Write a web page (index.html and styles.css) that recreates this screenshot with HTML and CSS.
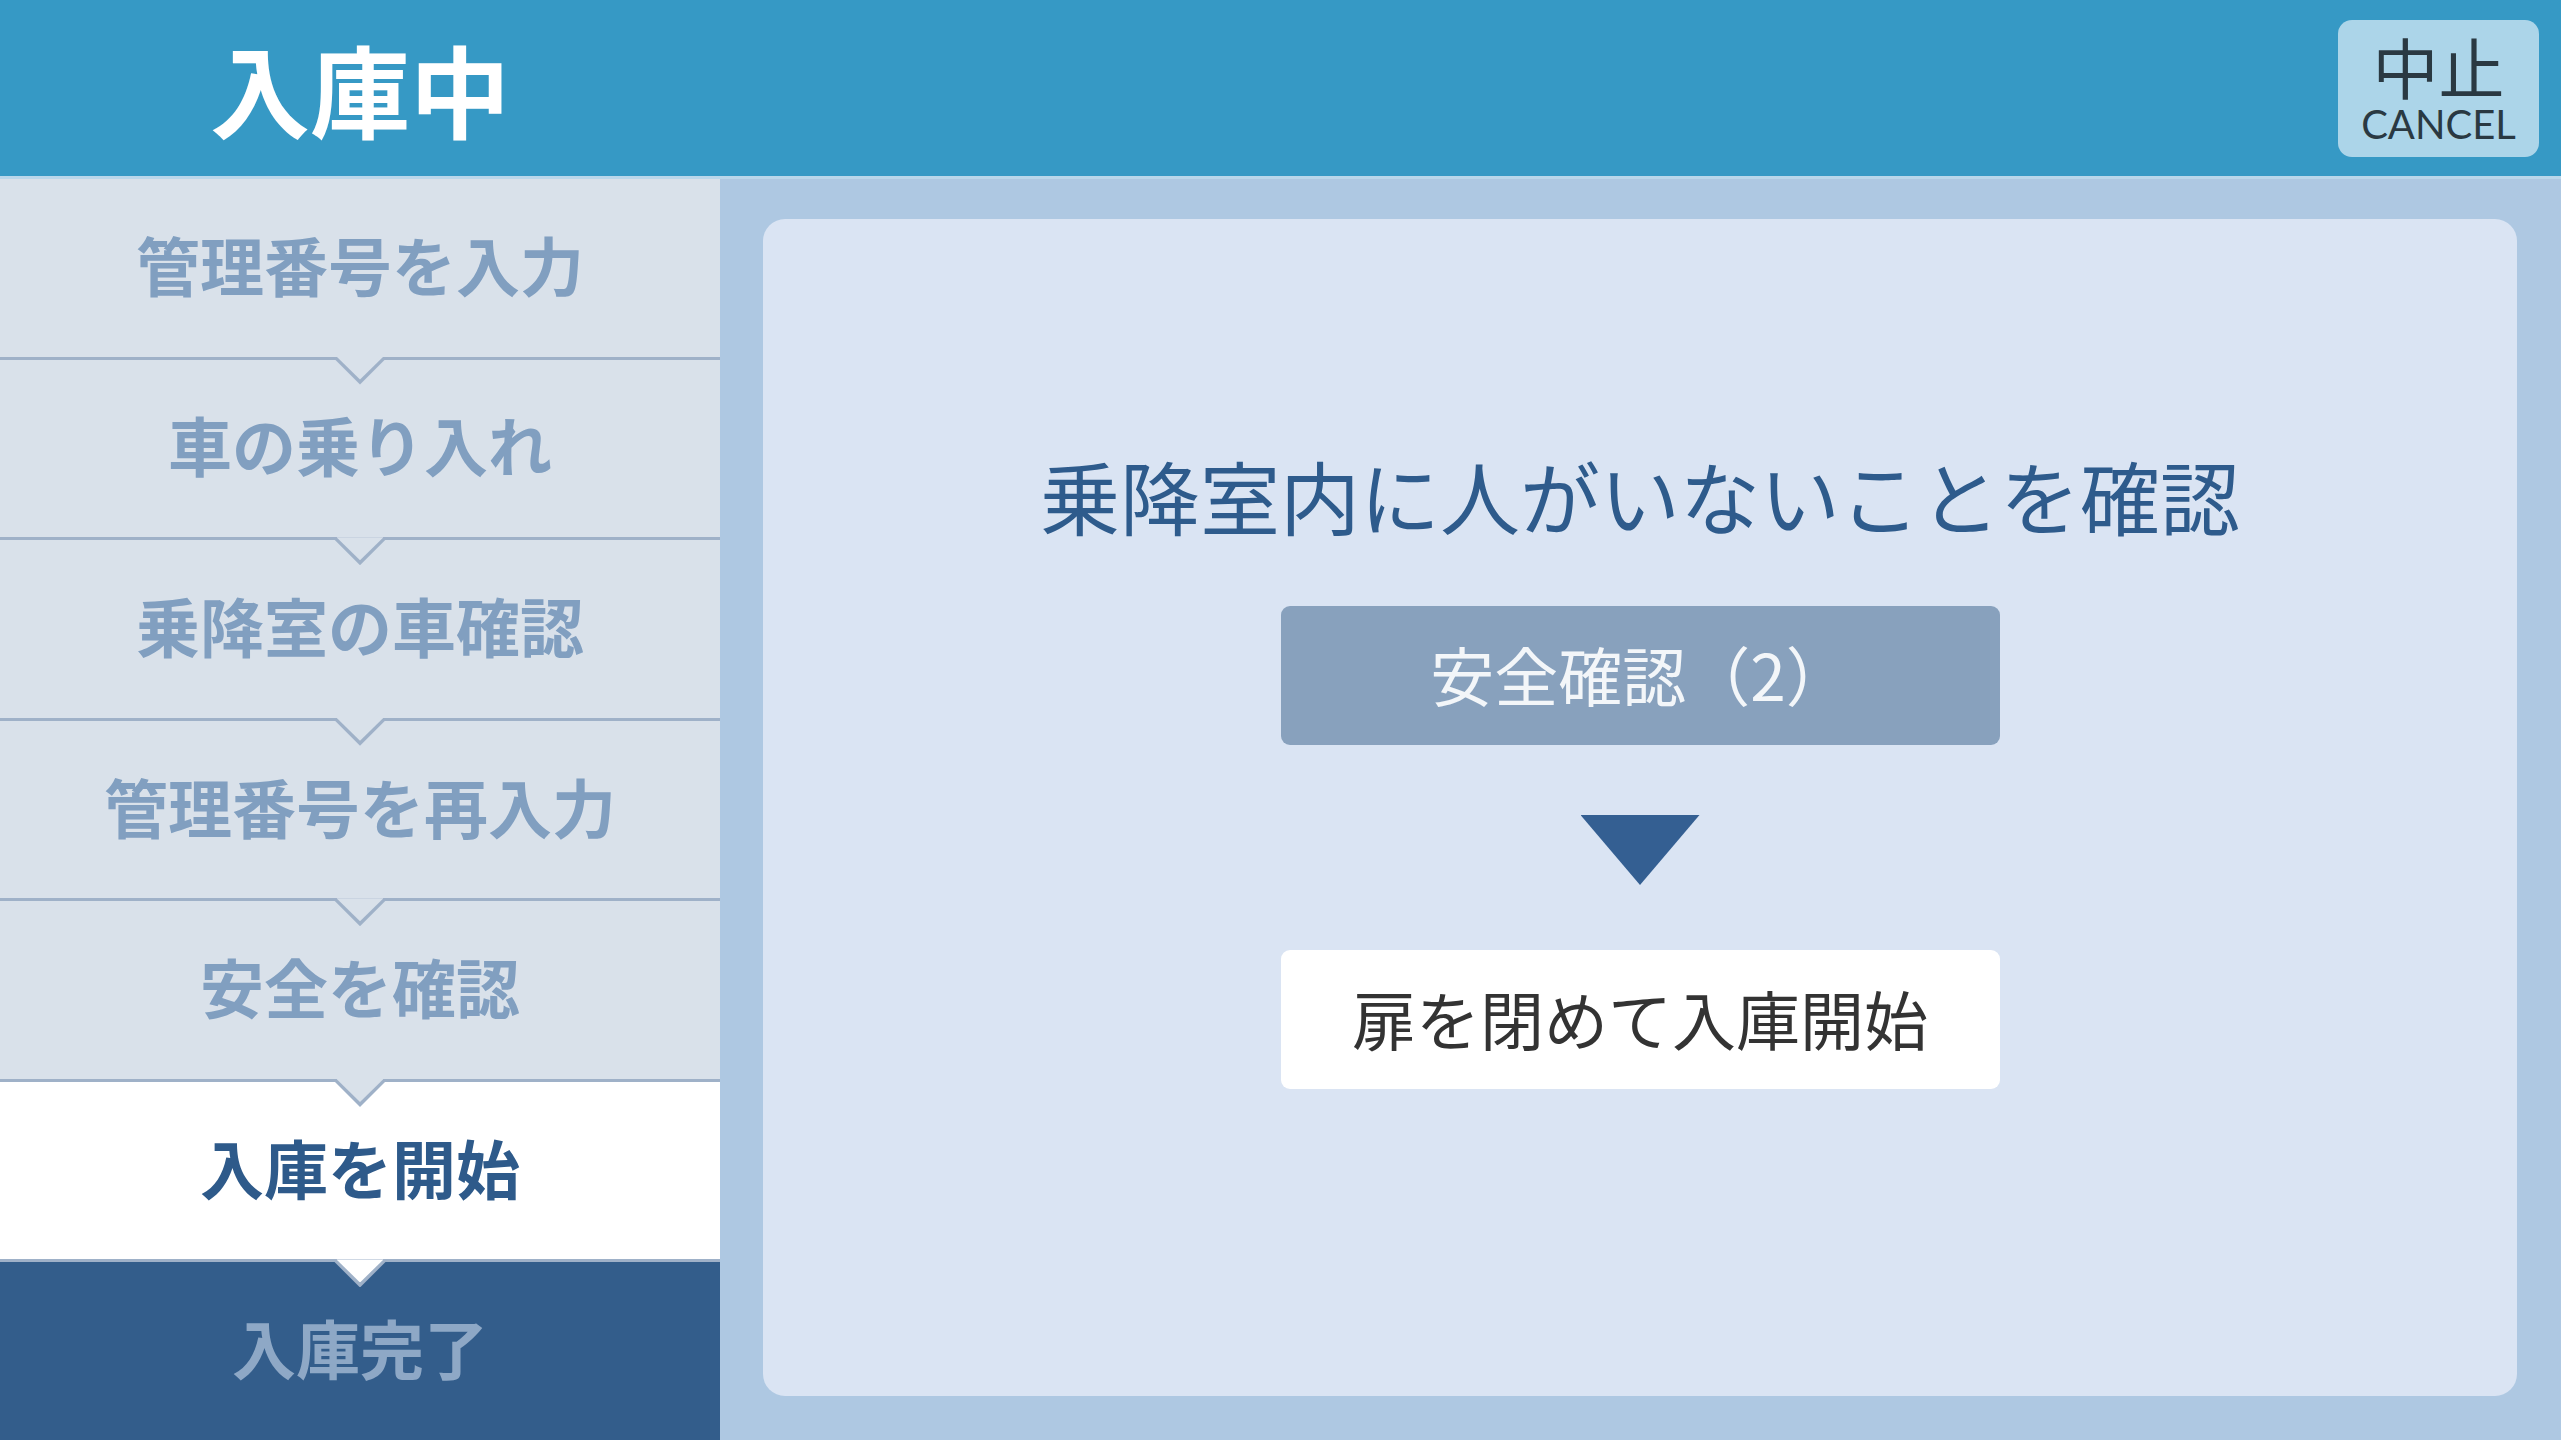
FILE: index.html
```html
<!DOCTYPE html>
<html lang="ja">
<head>
  <meta charset="UTF-8" />
  <meta name="viewport" content="width=device-width, initial-scale=1.0" />
  <title>入庫中</title>
  <link rel="stylesheet" href="styles.css">
</head>
<body>

  <header class="topbar">
    <div class="topbar-title">入庫中</div>
    <button class="cancel-btn" type="button">
      <span class="cancel-jp">中止</span>
      <span class="cancel-en">CANCEL</span>
    </button>
  </header>

  <div class="layout">
    <nav class="steps">
      <div class="step">管理番号を入力</div>
      <div class="step">車の乗り入れ</div>
      <div class="step">乗降室の車確認</div>
      <div class="step">管理番号を再入力</div>
      <div class="step">安全を確認</div>
      <div class="step step-current">入庫を開始</div>
      <div class="step step-next">入庫完了</div>
    </nav>

    <main class="stage">
      <section class="panel">
        <h1 class="panel-message">乗降室内に人がいないことを確認</h1>
        <div class="btn btn-wait">安全確認（2）</div>
        <div class="arrow-down"></div>
        <button class="btn btn-go" type="button">扉を閉めて入庫開始</button>
      </section>
    </main>
  </div>

</body>
</html>
```

FILE: styles.css
```css
* {
  margin: 0;
  padding: 0;
  box-sizing: border-box;
}

html, body {
  height: 100%;
  overflow: hidden;
  font-family: "Noto Sans CJK JP", "Noto Sans", sans-serif;
  background-color: #aec8e2;
}

/* top bar */
.topbar {
  height: 179px;
  background-color: #3699c5;
  border-bottom: 3px solid #b9d7eb;
  display: flex;
  align-items: center;
  justify-content: space-between;
  padding-right: 22px;
}

.topbar-title {
  width: 720px;
  text-align: center;
  font-size: 100px;
  font-weight: 700;
  line-height: 1;
  color: #fff;
}

.cancel-btn {
  width: 201px;
  height: 137px;
  border: none;
  border-radius: 14px;
  background-color: #acd5e9;
  color: #2a3942;
  display: flex;
  flex-direction: column;
  align-items: center;
  justify-content: center;
  font-family: inherit;
}

.cancel-jp {
  font-size: 66px;
  line-height: 66px;
}

.cancel-en {
  margin-top: 6px;
  font-family: "Lato", "Liberation Sans", sans-serif;
  font-size: 40px;
  line-height: 40px;
}

.layout {
  display: flex;
  height: calc(100vh - 179px);
}

/* step list on the left */
.steps {
  width: 720px;
  display: flex;
  flex-direction: column;
}

.step {
  flex: 1;
  position: relative;
  display: flex;
  align-items: center;
  justify-content: center;
  padding-bottom: 10px;
  font-size: 64px;
  font-weight: 700;
  color: #819fc0;
  background-color: #d9e1ea;
  border-bottom: 3px solid #9fb1c8;
}

/* little tail pointing to the next step */
.step::before,
.step::after {
  content: "";
  position: absolute;
  top: 100%;
  left: 50%;
  transform: translateX(-50%);
  clip-path: polygon(0 0, 100% 0, 50% 100%);
  z-index: 1;
}

.step::before {
  width: 56px;
  height: 28px;
  background-color: #9fb1c8;
}

.step::after {
  width: 47px;
  height: 23px;
  background-color: #d9e1ea;
}

.step-current {
  background-color: #fff;
  color: #2e5a8a;
}

.step-current::after {
  background-color: #fff;
}

.step-next {
  background-color: #335d8b;
  color: #8ea8c6;
  border-bottom: none;
}

.step-next::before,
.step-next::after {
  display: none;
}

/* main area */
.stage {
  flex: 1;
  display: flex;
  padding: 40px 44px 44px 43px;
}

.panel {
  flex: 1;
  display: flex;
  flex-direction: column;
  align-items: center;
  padding-top: 225px;
  background-color: #dae4f3;
  border-radius: 22px;
}

.panel-message {
  font-size: 80px;
  font-weight: 400;
  line-height: 100px;
  color: #2e5b8c;
}

.btn {
  width: 719px;
  height: 139px;
  border: none;
  border-radius: 9px;
  display: flex;
  align-items: center;
  justify-content: center;
  padding-bottom: 6px;
  font-family: inherit;
  font-size: 64px;
}

.btn-wait {
  margin-top: 62px;
  background-color: #88a1bd;
  color: #f3f6f9;
}

.arrow-down {
  margin-top: 70px;
  width: 119px;
  height: 70px;
  background-color: #345f92;
  clip-path: polygon(0 0, 100% 0, 50% 100%);
}

.btn-go {
  margin-top: 65px;
  background-color: #fff;
  color: #333;
}
```
